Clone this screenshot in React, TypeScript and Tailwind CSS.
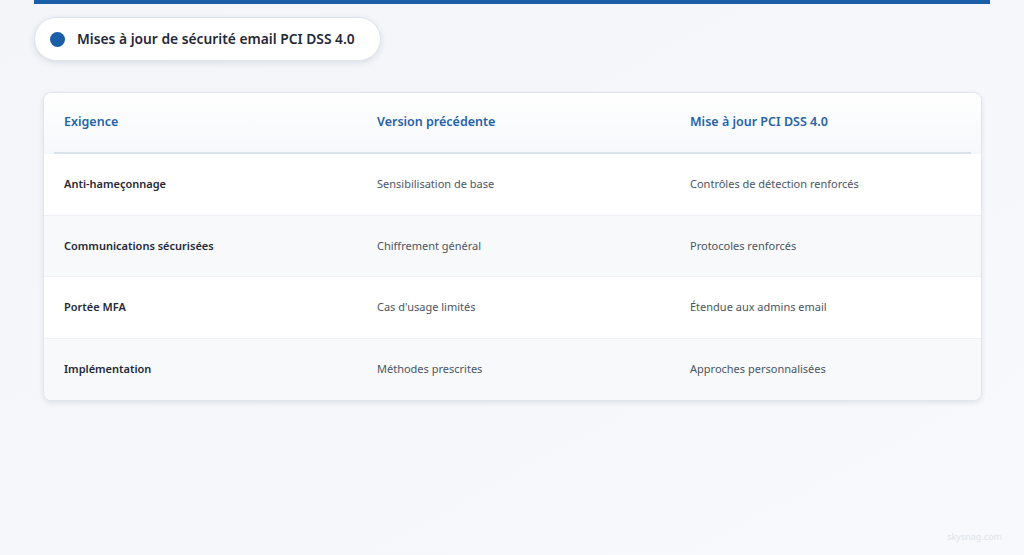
export default function App() {
  const rows = [
    ["Anti-hameçonnage", "Sensibilisation de base", "Contrôles de détection renforcés"],
    ["Communications sécurisées", "Chiffrement général", "Protocoles renforcés"],
    ["Portée MFA", "Cas d'usage limités", "Étendue aux admins email"],
    ["Implémentation", "Méthodes prescrites", "Approches personnalisées"],
  ];
  return (
    <div className="relative h-[555px] w-[1024px] overflow-hidden bg-gradient-to-br from-[#f3f5f8] to-[#f7f9fc] font-['Noto_Sans',sans-serif]">
      <div className="mx-[34px] h-[4px] bg-[#1b5ea8]" />
      <div className="ml-[34px] mt-[13px] flex h-[44px] w-[347px] items-center gap-[12px] rounded-full border border-[#dde3ec] bg-white pl-[15px] shadow-[0_2px_6px_rgba(30,60,110,0.12)]">
        <span className="h-[15px] w-[15px] rounded-full bg-[#1b5ea8]" />
        <span className="text-[13.8px] font-semibold text-[#1f2937]">Mises à jour de sécurité email PCI DSS 4.0</span>
      </div>
      <div className="ml-[43px] mt-[31px] w-[939px] rounded-[8px] border border-[#e1e6ee] bg-white shadow-[0_2px_5px_rgba(30,60,110,0.1)]">
        <div className="rounded-t-[8px] bg-gradient-to-b from-white to-[#f6f8fb] px-[10px]">
          <div className="grid h-[61px] grid-cols-[313px_313px_1fr] items-center border-b-2 border-[#d9e1ec] px-[10px] text-[12.5px] font-semibold text-[#2563a8]">
            <div>Exigence</div>
            <div>Version précédente</div>
            <div>Mise à jour PCI DSS 4.0</div>
          </div>
        </div>
        {rows.map((r, i) => (
          <div
            key={i}
            className={`grid h-[61.5px] grid-cols-[313px_313px_1fr] items-center px-[20px] text-[11px] ${i % 2 ? "bg-[#f7f9fb]" : "bg-white"} ${i < 3 ? "border-b border-[#eef1f5]" : "rounded-b-[8px]"}`}
          >
            <div className="font-semibold text-[#1f2937]">{r[0]}</div>
            <div className="text-[#4b5563]">{r[1]}</div>
            <div className="text-[#4b5563]">{r[2]}</div>
          </div>
        ))}
      </div>
      <div className="absolute bottom-[12px] right-[22px] text-[9px] text-[#dfe3ea]">skysnag.com</div>
    </div>
  );
}
